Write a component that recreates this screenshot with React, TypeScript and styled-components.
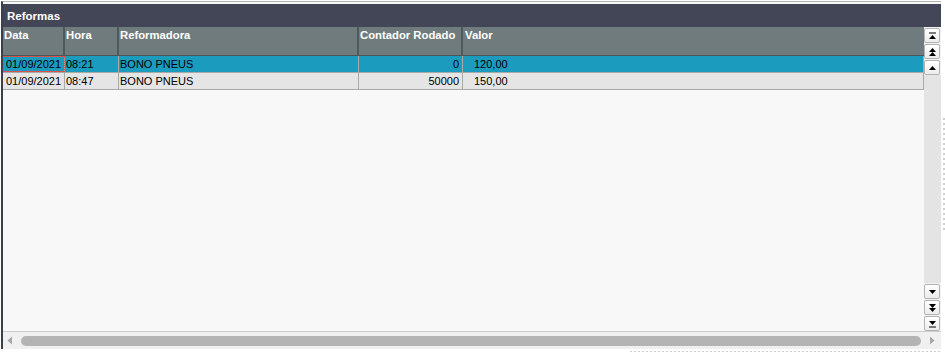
import styled, { createGlobalStyle } from "styled-components";

const GlobalStyle = createGlobalStyle`
    body {
        margin: 0;
        background: #ffffff;
        font-family: "Liberation Sans", Arial, sans-serif;
    }
`;

const Page = styled.div`
    display: flex;
    flex-direction: column;
    width: 945px;
    height: 352px;
    padding-top: 1px;
    box-sizing: border-box;
`;

const TopRow = styled.div`
    display: flex;
`;

const Panel = styled.div`
    display: flex;
    flex-direction: column;
    width: 940px;
    height: 348px;
    margin-left: 1px;
    padding-top: 2px;
    box-sizing: border-box;
    border-left: 2px solid #3b3e4b;
    border-top: 1px solid #b4b4b4;
    background: #f8f8f8;
`;

const SideGutter = styled.div`
    width: 2px;
    height: 112px;
    margin: 117px 0 0 2px;
    background: repeating-linear-gradient(to bottom, #cfcfcf 0 2px, transparent 2px 5px);
`;

const BottomGutter = styled.div`
    width: 310px;
    height: 1px;
    margin: 2px 0 0 630px;
    background: repeating-linear-gradient(to right, #cfcfcf 0 2px, transparent 2px 4px);
`;

const TitleBar = styled.div`
    height: 23px;
    display: flex;
    align-items: center;
    padding-left: 4px;
    background: #434656;
    color: #ffffff;
    font-weight: 700;
    font-size: 11.5px;
`;

const Main = styled.div`
    flex: 1;
    display: flex;
    min-height: 0;
`;

const Grid = styled.div`
    width: 921px;
    display: flex;
    flex-direction: column;
    background: #f8f8f8;
`;

const columns = "62px 54px 240px 104px 1fr";

const HeaderRow = styled.div`
    display: grid;
    grid-template-columns: ${columns};
    height: 29px;
    box-sizing: border-box;
    background: #6f7b7d;
    border-bottom: 1px solid #4c5456;
`;

const HeaderCell = styled.div`
    color: #ffffff;
    font-weight: 700;
    font-size: 11.3px;
    line-height: 13px;
    padding: 2px 0 0 1px;
    border-right: 2px solid #4f585a;
    white-space: nowrap;
    &:last-child {
        border-right: none;
        padding-left: 2px;
    }
`;

const Row = styled.div<{ selected?: boolean }>`
    display: grid;
    grid-template-columns: ${columns};
    height: 17px;
    box-sizing: border-box;
    background: ${props => props.selected ? '#1b9cbf' : '#e5e5e5'};
    border-bottom: 1px solid #a9a9a9;
    border-right: 1px solid #a9a9a9;
`;

const Cell = styled.div<{ align?: string, pad?: number, focused?: boolean }>`
    font-size: 11px;
    line-height: 16px;
    color: #000000;
    text-align: ${props => props.align || 'left'};
    padding: ${props => props.align === 'right' ? '0 3px 0 0' : `0 0 0 ${props.pad ?? 1}px`};
    border-right: 1px solid #a9a9a9;
    white-space: nowrap;
    overflow: hidden;
    outline: ${props => props.focused ? '1px dotted #d9534f' : 'none'};
    outline-offset: -1px;
    &:last-child {
        border-right: none;
    }
`;

const VScroll = styled.div`
    width: 17px;
    display: flex;
    flex-direction: column;
    justify-content: space-between;
    background: #e4e4e4;
`;

const ButtonGroup = styled.div`
    display: flex;
    flex-direction: column;
    gap: 1px;
    padding: 1px 1px 0 0;
    background: #f2f2f2;
`;

const ScrollButton = styled.div`
    width: 16px;
    height: 15px;
    box-sizing: border-box;
    display: flex;
    align-items: center;
    justify-content: center;
    border: 1px solid #b3b3b3;
    border-radius: 2px;
    background: linear-gradient(#ffffff, #ececec);
`;

const HScroll = styled.div`
    height: 18px;
    box-sizing: border-box;
    display: flex;
    align-items: center;
    gap: 8px;
    padding: 0 6px 0 4px;
    border-top: 1px solid #cdcdcd;
    background: #f0f0f0;
`;

const Thumb = styled.div`
    flex: 1;
    height: 10px;
    border-radius: 5px;
    background: #b4b4b4;
`;

type IconKind = "first" | "pageUp" | "up" | "down" | "pageDown" | "last";

const ScrollIcon = ({ kind }: { kind: IconKind }) => {
    const up = (y: number) => `M1 ${y + 4}L4.5 ${y}L8 ${y + 4}Z`;
    const down = (y: number) => `M1 ${y}L4.5 ${y + 4}L8 ${y}Z`;
    const shapes: Record<IconKind, string> = {
        first: "M1 1.5H8V2.5H1Z " + up(4),
        pageUp: up(1) + " " + up(5),
        up: up(3),
        down: down(3),
        pageDown: down(1) + " " + down(5),
        last: down(2) + " M1 7.5H8V8.5H1Z",
    };
    return (
        <svg width="9" height="10" viewBox="0 0 9 10">
            <path d={shapes[kind]} fill="#000" />
        </svg>
    );
};

const rows = [
    { data: "01/09/2021", hora: "08:21", reformadora: "BONO PNEUS", contador: "0", valor: "120,00" },
    { data: "01/09/2021", hora: "08:47", reformadora: "BONO PNEUS", contador: "50000", valor: "150,00" },
];

export default function App() {
    return (
        <>
            <GlobalStyle />
            <Page>
                <TopRow>
                    <Panel>
                        <TitleBar>Reformas</TitleBar>
                        <Main>
                            <Grid>
                                <HeaderRow>
                                    <HeaderCell>Data</HeaderCell>
                                    <HeaderCell>Hora</HeaderCell>
                                    <HeaderCell>Reformadora</HeaderCell>
                                    <HeaderCell>Contador Rodado</HeaderCell>
                                    <HeaderCell>Valor</HeaderCell>
                                </HeaderRow>
                                {rows.map((row, index) => (
                                    <Row key={index} selected={index === 0}>
                                        <Cell pad={3} focused={index === 0}>{row.data}</Cell>
                                        <Cell>{row.hora}</Cell>
                                        <Cell>{row.reformadora}</Cell>
                                        <Cell align="right">{row.contador}</Cell>
                                        <Cell pad={11}>{row.valor}</Cell>
                                    </Row>
                                ))}
                            </Grid>
                            <VScroll>
                                <ButtonGroup>
                                    <ScrollButton><ScrollIcon kind="first" /></ScrollButton>
                                    <ScrollButton><ScrollIcon kind="pageUp" /></ScrollButton>
                                    <ScrollButton><ScrollIcon kind="up" /></ScrollButton>
                                </ButtonGroup>
                                <ButtonGroup>
                                    <ScrollButton><ScrollIcon kind="down" /></ScrollButton>
                                    <ScrollButton><ScrollIcon kind="pageDown" /></ScrollButton>
                                    <ScrollButton><ScrollIcon kind="last" /></ScrollButton>
                                </ButtonGroup>
                            </VScroll>
                        </Main>
                        <HScroll>
                            <svg width="6" height="9" viewBox="0 0 6 9">
                                <path d="M5 0.5L0.5 4.5L5 8.5Z" fill="#a6a6a6" />
                            </svg>
                            <Thumb />
                            <svg width="6" height="9" viewBox="0 0 6 9">
                                <path d="M1 0.5L5.5 4.5L1 8.5Z" fill="#a6a6a6" />
                            </svg>
                        </HScroll>
                    </Panel>
                    <SideGutter />
                </TopRow>
                <BottomGutter />
            </Page>
        </>
    );
}
